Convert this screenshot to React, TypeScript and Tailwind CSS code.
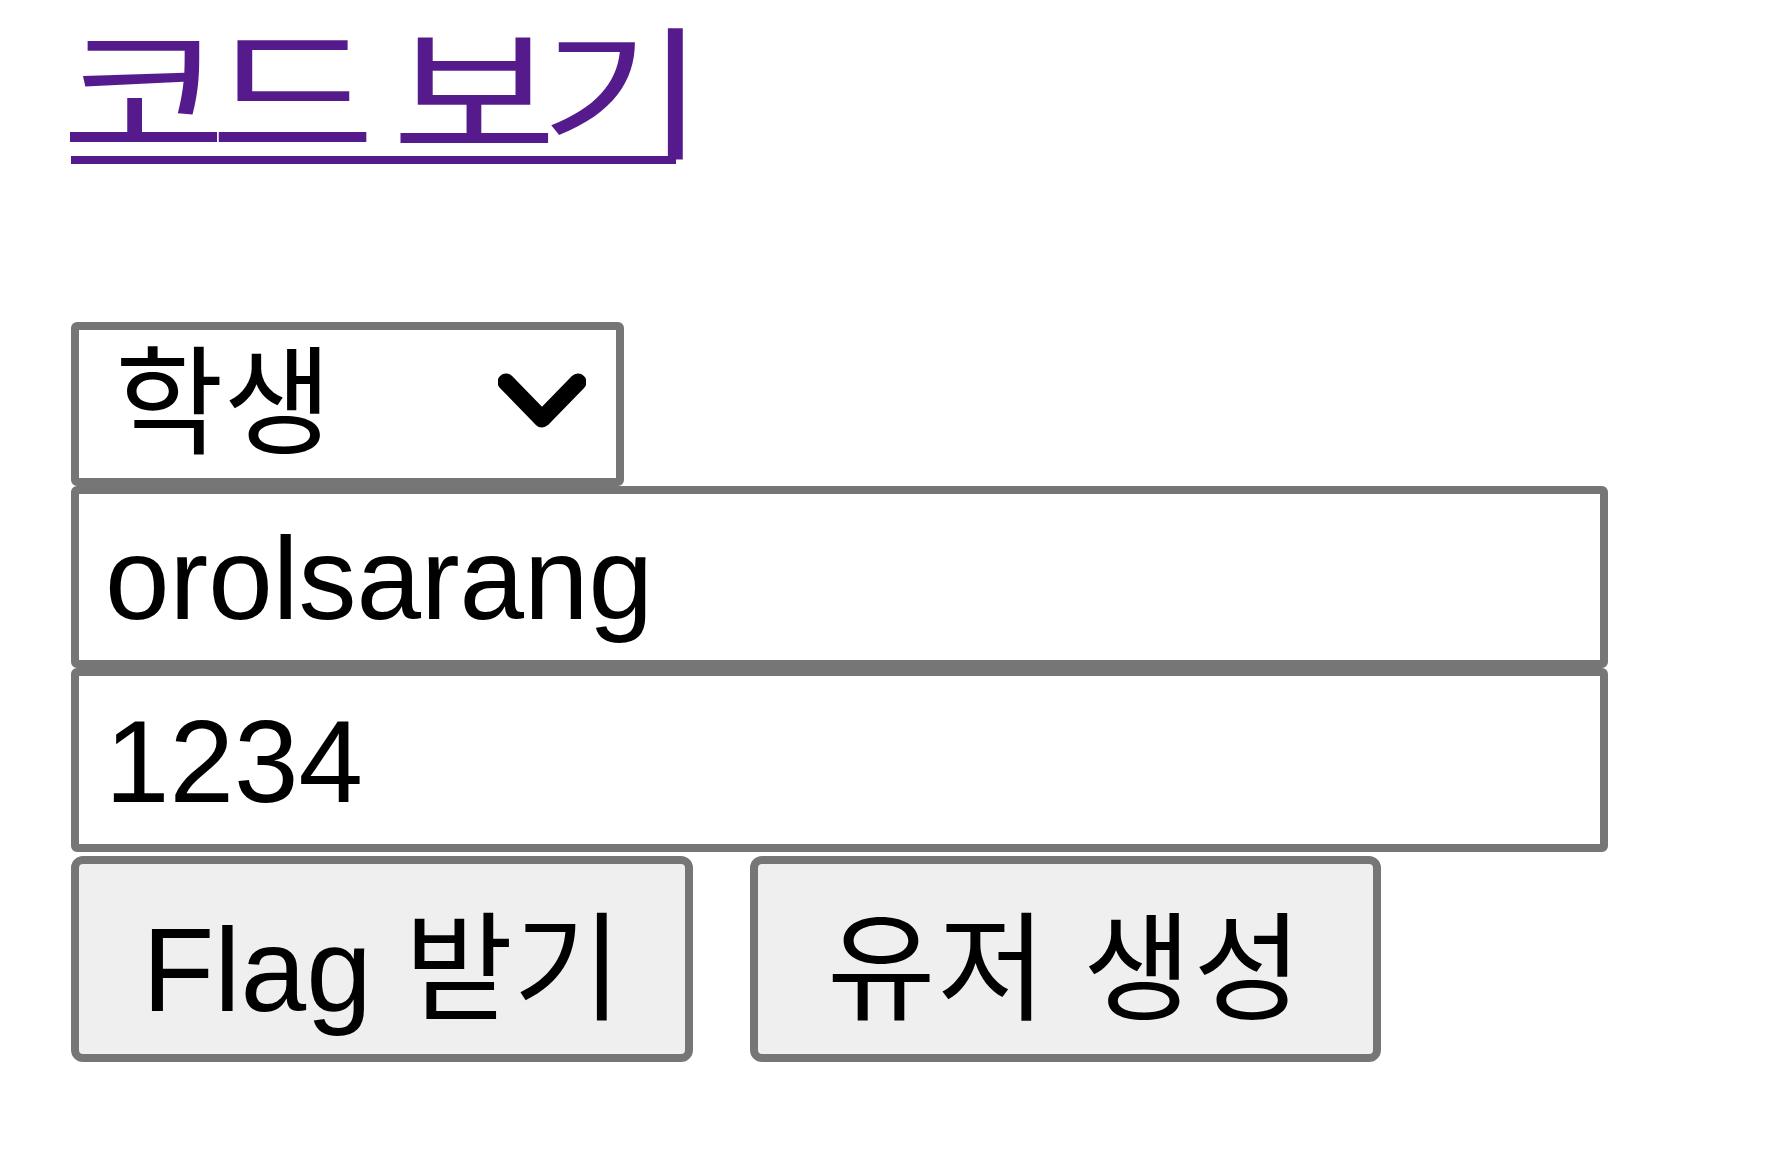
import React from "react";

const FONT = "font-['Liberation_Sans','Noto_Sans_CJK_KR',sans-serif]";

export default function App() {
  return (
    <div className={`${FONT} bg-white min-h-[1173px] pl-[71px] pt-[34px] text-black`}>
      <a
        href="#"
        className="block w-[605px] h-[130px] border-b-[8px] border-[#551a8b] text-[#551a8b] no-underline overflow-visible"
      >
        <span className="inline-block origin-left scale-x-[1.25] -ml-[10px] whitespace-nowrap text-[144px] leading-[130px] tracking-[-13.5px]">
          코드 보기
        </span>
      </a>
      <div className="h-[158px]" />
      <div className="flex flex-col items-start">
        <div className="flex items-center justify-between w-[553px] h-[164px] border-[8px] border-[#767676] rounded-[6px] bg-white pl-[36px] pr-[30px] text-[118px] leading-none">
          <span>학생</span>
          <svg width="88" height="60" viewBox="0 0 88 60" className="shrink-0 -mt-[4px]">
            <polyline points="8,10 44,47 80,10" fill="none" stroke="#000" strokeWidth="17" strokeLinecap="round" strokeLinejoin="round" />
          </svg>
        </div>
        <div className="flex items-center w-[1537px] h-[182px] border-[8px] border-[#767676] rounded-[6px] bg-white pl-[26px] pt-[4px] text-[116px] leading-none">
          orolsarang
        </div>
        <div className="flex items-center w-[1537px] h-[184px] border-[8px] border-[#767676] rounded-[6px] bg-white pl-[26px] pt-[4px] text-[116px] leading-none">
          1234
        </div>
        <div className="flex gap-[57px] mt-[4px]">
          <button className="flex items-center justify-center w-[622px] h-[206px] border-[8px] border-[#767676] rounded-[12px] bg-[#efefef] pt-[22px] text-[118px] leading-none">
            Flag 받기
          </button>
          <button className="flex items-center justify-center w-[631px] h-[206px] border-[8px] border-[#767676] rounded-[12px] bg-[#efefef] pt-[22px] text-[118px] leading-none tracking-[2px]">
            유저 생성
          </button>
        </div>
      </div>
    </div>
  );
}
